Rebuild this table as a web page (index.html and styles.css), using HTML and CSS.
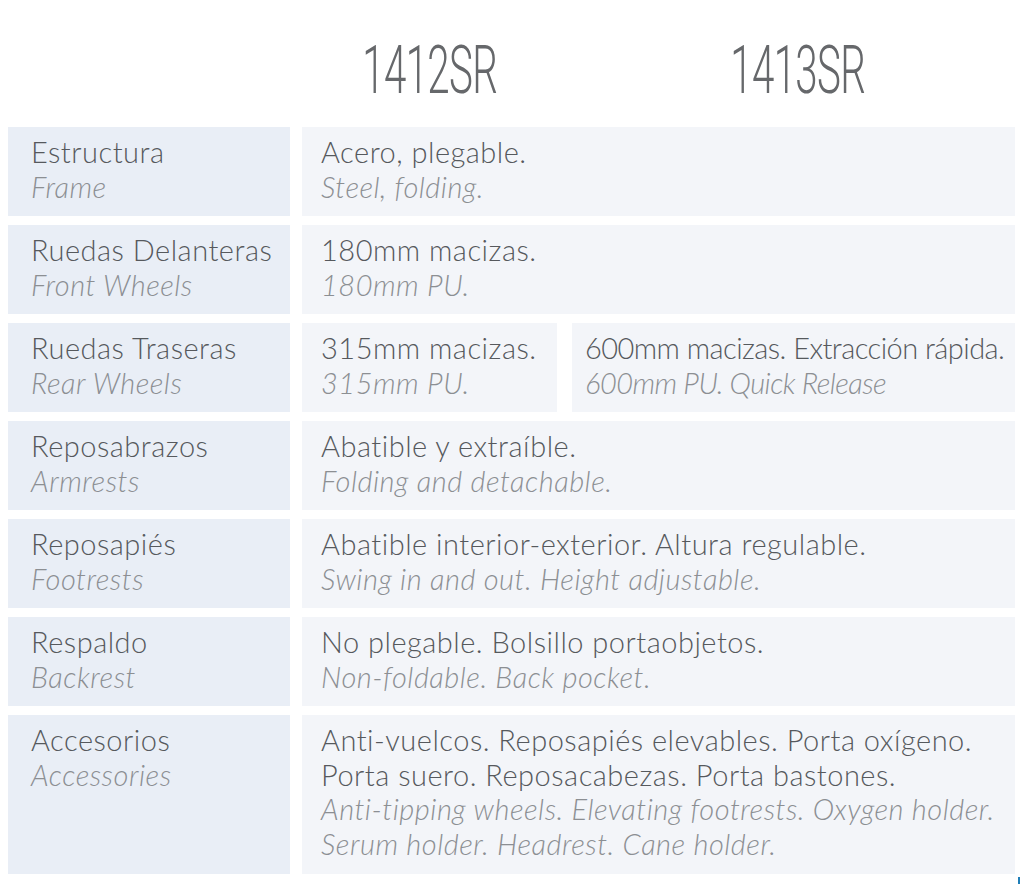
FILE: index.html
```html
<!DOCTYPE html>
<html lang="es">
<head>
<meta charset="utf-8">
<title>Especificaciones 1412SR / 1413SR</title>
<link rel="stylesheet" href="styles.css">
</head>
<body>
<div class="page">
  <div class="header">
    <div class="spacer"></div>
    <div class="model"><span>1412SR</span></div>
    <div class="model model-b"><span>1413SR</span></div>
  </div>
  <div class="table">
    <div class="row">
      <div class="cell label"><p class="es">Estructura</p><p class="en">Frame</p></div>
      <div class="cell value span"><p class="es">Acero, plegable.</p><p class="en">Steel, folding.</p></div>
    </div>
    <div class="row">
      <div class="cell label"><p class="es">Ruedas Delanteras</p><p class="en">Front Wheels</p></div>
      <div class="cell value span"><p class="es">180mm macizas.</p><p class="en">180mm PU.</p></div>
    </div>
    <div class="row">
      <div class="cell label"><p class="es">Ruedas Traseras</p><p class="en">Rear Wheels</p></div>
      <div class="cell value"><p class="es">315mm macizas.</p><p class="en">315mm PU.</p></div>
      <div class="cell value alt"><p class="es">600mm macizas. Extracción rápida.</p><p class="en">600mm PU. Quick Release</p></div>
    </div>
    <div class="row">
      <div class="cell label"><p class="es">Reposabrazos</p><p class="en">Armrests</p></div>
      <div class="cell value span"><p class="es">Abatible y extraíble.</p><p class="en">Folding and detachable.</p></div>
    </div>
    <div class="row">
      <div class="cell label"><p class="es">Reposapiés</p><p class="en">Footrests</p></div>
      <div class="cell value span"><p class="es">Abatible interior-exterior. Altura regulable.</p><p class="en">Swing in and out. Height adjustable.</p></div>
    </div>
    <div class="row">
      <div class="cell label"><p class="es">Respaldo</p><p class="en">Backrest</p></div>
      <div class="cell value span"><p class="es">No plegable. Bolsillo portaobjetos.</p><p class="en">Non-foldable. Back pocket.</p></div>
    </div>
    <div class="row row-tall">
      <div class="cell label"><p class="es">Accesorios</p><p class="en">Accessories</p></div>
      <div class="cell value span"><p class="es">Anti-vuelcos. Reposapiés elevables. Porta oxígeno.<br>Porta suero. Reposacabezas. Porta bastones.</p><p class="en">Anti-tipping wheels. Elevating footrests. Oxygen holder.<br>Serum holder. Headrest. Cane holder.</p></div>
    </div>
  </div>
  <div class="mark"></div>
</div>
</body>
</html>
```
FILE: styles.css
```css
html, body {
  margin: 0;
  padding: 0;
  background: #ffffff;
}
body {
  font-family: "Lato", "Noto Sans", sans-serif;
  color: #555a5f;
}
.page {
  position: relative;
  width: 1021px;
  height: 884px;
  overflow: hidden;
}
.header {
  display: grid;
  grid-template-columns: 282px 255px 446px;
  column-gap: 12px;
  padding-left: 8px;
  height: 127px;
}
.model {
  display: flex;
  justify-content: center;
  align-items: flex-start;
  padding-top: 33px;
}
.model-b {
  padding-left: 11px;
}
.model span {
  display: inline-block;
  font-family: "Roboto", sans-serif;
  font-weight: 300;
  font-size: 66px;
  line-height: 76px;
  color: #66686b;
  transform: scaleX(0.61);
  letter-spacing: -1px;
}
.table {
  display: flex;
  flex-direction: column;
  row-gap: 9px;
  padding-left: 8px;
}
.row {
  display: grid;
  grid-template-columns: 282px 255px 446px;
  column-gap: 12px;
  min-height: 89px;
}
.cell {
  box-sizing: border-box;
  padding: 8px 8px 0 19px;
}
.label {
  background: #e9eef6;
  padding-left: 23px;
}
.value {
  background: #f3f5f9;
}
.value.span {
  grid-column: 2 / 4;
}
.value.alt {
  margin-left: 3px;
  padding-left: 13px;
  padding-right: 2px;
}
.value.alt p {
  letter-spacing: -0.55px;
}
.row-tall {
  min-height: 159px;
}
p {
  margin: 0;
  font-size: 29px;
  line-height: 34.5px;
  letter-spacing: 0.5px;
  white-space: nowrap;
}
.es {
  color: #56595d;
  font-weight: 300;
}
.en {
  color: #8c8f93;
  font-style: italic;
  font-weight: 300;
}
.mark {
  position: absolute;
  left: 1018px;
  top: 877px;
  width: 2px;
  height: 7px;
  background: #1f7fb8;
}
```
